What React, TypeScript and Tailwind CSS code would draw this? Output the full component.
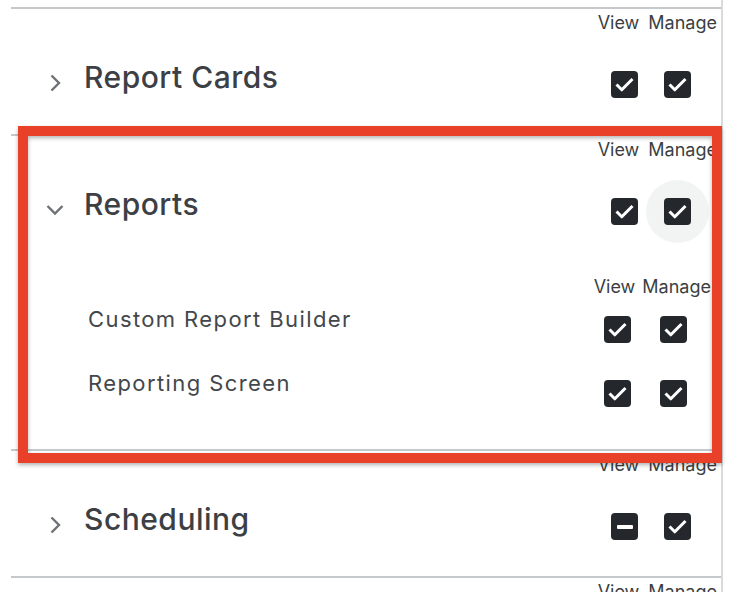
import React from "react";

type CState = "checked" | "indeterminate";

const Box = ({ state }: { state: CState }) => (
  <div className="w-[27px] h-[27px] rounded-[4px] bg-[#24282c] flex items-center justify-center">
    {state === "checked" ? (
      <svg width="27" height="27" viewBox="0 0 27 27">
        <path d="M5.5 13.5 L10.8 18.8 L21.5 8" fill="none" stroke="#ffffff" strokeWidth="3" strokeLinejoin="round" />
      </svg>
    ) : (
      <div className="w-[16px] h-[4px] bg-white rounded-[1px]" />
    )}
  </div>
);

const ChevronRight = () => (
  <svg width="13" height="18" viewBox="0 0 13 18">
    <path d="M2.5 1.5 L10 9 L2.5 16.5" fill="none" stroke="#6e7276" strokeWidth="2.4" />
  </svg>
);

const ChevronDown = () => (
  <svg width="18" height="12" viewBox="0 0 18 12">
    <path d="M1.5 2 L9 9.5 L16.5 2" fill="none" stroke="#6e7276" strokeWidth="2.4" />
  </svg>
);

const Header = ({ sub }: { sub?: boolean }) => (
  <div
    className={
      sub
        ? "flex justify-end gap-[7px] mt-[24px] pr-[10px] text-[18px] leading-[18px] text-[#3b3f43]"
        : "flex justify-end gap-[9px] pt-[5px] pr-[4px] text-[18px] leading-[18px] text-[#3b3f43]"
    }
  >
    <span>View</span>
    <span>Manage</span>
  </div>
);

type SectionProps = {
  title: string;
  expanded?: boolean;
  view: CState;
  manage: CState;
  hover?: boolean;
  heightClass: string;
  children?: React.ReactNode;
};

const Section = ({ title, expanded, view, manage, hover, heightClass, children }: SectionProps) => (
  <div className={`border-t-2 border-[#c5c9cc] ${heightClass}`}>
    <Header />
    <div className={`flex items-start ${expanded ? "h-[95px]" : ""}`}>
      <div className="w-[18px] h-[18px] ml-[35px] mt-[42px] flex items-center justify-center">
        {expanded ? <ChevronDown /> : <ChevronRight />}
      </div>
      <div className="ml-[20px] mt-[30px] text-[30px] leading-[30px] tracking-[0.5px] font-medium text-[#3c4044]">
        {title}
      </div>
      <div className="ml-auto mr-[30px] mt-[39px] flex gap-[26px]">
        <Box state={view} />
        <div className="relative">
          {hover && <div className="absolute -inset-[18px] rounded-full bg-[#f2f3f3]" />}
          <div className="relative">
            <Box state={manage} />
          </div>
        </div>
      </div>
    </div>
    {children}
  </div>
);

const SubRow = ({ label }: { label: string }) => (
  <div className="flex items-start h-[64px]">
    <div className="ml-[77px] mt-[12px] text-[22px] leading-[22px] tracking-[1.4px] text-[#43474b]">{label}</div>
    <div className="ml-auto mr-[34px] mt-[20px] flex gap-[29px]">
      <Box state="checked" />
      <Box state="checked" />
    </div>
  </div>
);

export default function App() {
  return (
    <div className="w-[750px] h-[592px] bg-white overflow-hidden relative font-['Inter',sans-serif]">
      <div className="w-[723px] h-full border-r-2 border-[#d9dadb] pl-[11px] pt-[7px]">
        <Section title="Report Cards" view="checked" manage="checked" heightClass="h-[127px]" />
        <Section title="Reports" expanded view="checked" manage="checked" hover heightClass="h-[315px]">
          <Header sub />
          <SubRow label="Custom Report Builder" />
          <SubRow label="Reporting Screen" />
        </Section>
        <Section title="Scheduling" view="indeterminate" manage="checked" heightClass="h-[127px]" />
        <Section title="" view="checked" manage="checked" heightClass="h-[127px]" />
      </div>
      <div className="absolute left-[18px] top-[126px] w-[704px] h-[337px] border-[10px] border-[#e94129] shadow-[0_2px_4px_rgba(0,0,0,0.3),inset_0_2px_4px_rgba(0,0,0,0.3)]" />
    </div>
  );
}
